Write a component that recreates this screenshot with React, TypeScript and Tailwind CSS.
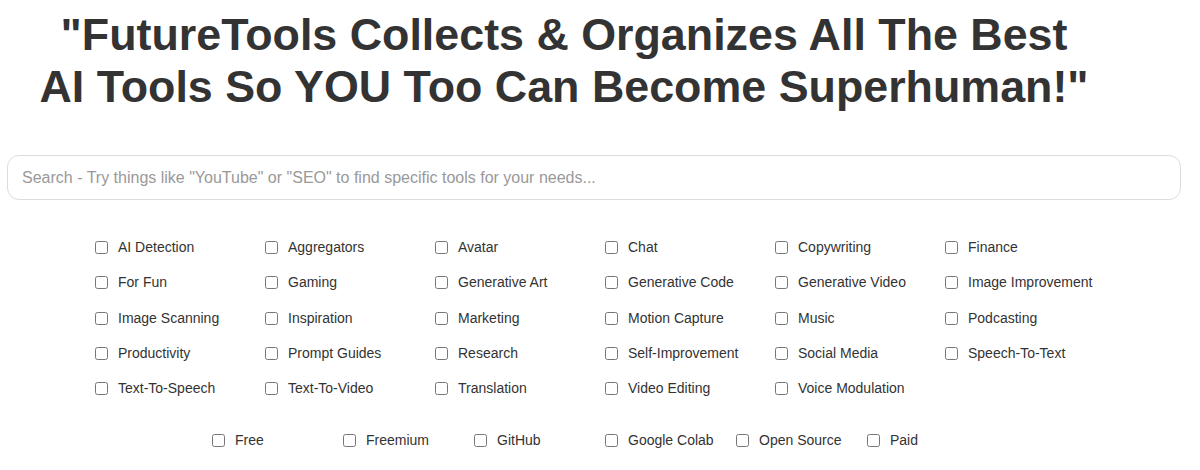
// FutureTools home hero — headline, search box and category/pricing filters.

const categories = [
  "AI Detection", "Aggregators", "Avatar", "Chat", "Copywriting", "Finance",
  "For Fun", "Gaming", "Generative Art", "Generative Code", "Generative Video", "Image Improvement",
  "Image Scanning", "Inspiration", "Marketing", "Motion Capture", "Music", "Podcasting",
  "Productivity", "Prompt Guides", "Research", "Self-Improvement", "Social Media", "Speech-To-Text",
  "Text-To-Speech", "Text-To-Video", "Translation", "Video Editing", "Voice Modulation",
];

const pricing = ["Free", "Freemium", "GitHub", "Google Colab", "Open Source", "Paid"];

function Filter({ label }: { label: string }) {
  return (
    <label className="flex items-center gap-[10px] text-[14px] text-[#333] whitespace-nowrap">
      <input type="checkbox" className="m-0 w-[13px] h-[13px] shrink-0" />
      {label}
    </label>
  );
}

export default function App() {
  return (
    <div className="w-[1200px] h-[470px] bg-white overflow-hidden font-['Liberation_Sans',Arial,sans-serif]">
      <h1 className="pt-[8px] pr-[72px] text-center text-[44.8px] leading-[52px] font-bold text-[#333]">
        "FutureTools Collects &amp; Organizes All The Best
        <br />
        AI Tools So YOU Too Can Become Superhuman!"
      </h1>

      <div className="mt-[43px] px-[7px] pr-[19px]">
        <input
          type="text"
          placeholder={'Search - Try things like "YouTube" or "SEO" to find specific tools for your needs...'}
          className="w-full h-[45px] px-[14px] rounded-xl border border-[#dcdcdc] text-[16px] text-[#333] placeholder:text-[#999] outline-none"
        />
      </div>

      <div className="mt-[30px] ml-[95px] grid grid-cols-[repeat(6,170px)] auto-rows-[35.3px] items-center">
        {categories.map((c) => (
          <Filter key={c} label={c} />
        ))}
      </div>

      <div className="mt-[17px] ml-[212px] grid grid-cols-[repeat(6,131px)] h-[35px] items-center">
        {pricing.map((p) => (
          <Filter key={p} label={p} />
        ))}
      </div>
    </div>
  );
}
